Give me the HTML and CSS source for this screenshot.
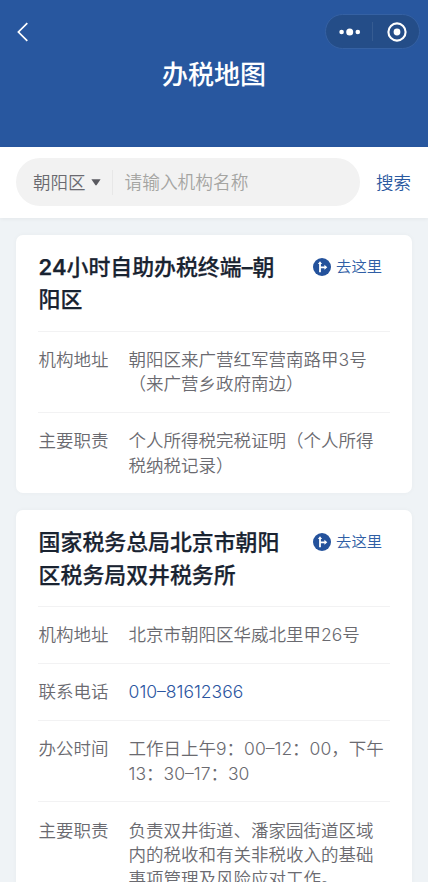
FILE: index.html
```html
<!DOCTYPE html>
<html lang="zh-CN">
<head>
<meta charset="utf-8">
<meta name="viewport" content="width=device-width, initial-scale=1">
<title>办税地图</title>
<link rel="stylesheet" href="styles.css">
</head>
<body>
<svg class="defs" aria-hidden="true">
  <symbol id="route" viewBox="0 0 18 18">
    <circle cx="9" cy="9" r="9" fill="#24529c"/>
    <path d="M7 5v9.2M7 9.3h5.5" fill="none" stroke="#fff" stroke-width="1.8"/>
    <path d="M4.9 6 7 3.3l2.1 2.7zM11.4 6.8l2.9 2.5-2.9 2.5z" fill="#fff"/>
  </symbol>
</svg>
<header class="header">
  <div class="nav">
    <svg class="back" viewBox="0 0 12 20"><path d="M10.3 1.2 1.4 10l8.9 8.8"/></svg>
    <div class="capsule">
      <svg class="more" viewBox="0 0 22 8"><circle cx="2.6" cy="4" r="2.3"/><circle cx="10.7" cy="4" r="3.5"/><circle cx="18.8" cy="4" r="2.3"/></svg>
      <span class="capsule-line"></span>
      <svg class="close" viewBox="0 0 20 20"><circle class="ring" cx="10" cy="10" r="8.6"/><circle class="dot" cx="10" cy="10" r="3.4"/></svg>
    </div>
  </div>
  <h1 class="page-title">办税地图</h1>
</header>
<div class="search">
  <div class="search-box">
    <span class="district">朝阳区</span>
    <svg class="caret" viewBox="0 0 10 7"><path d="M.4.3h9.2L5.7 6q-.7.9-1.4 0z"/></svg>
    <span class="search-line"></span>
    <span class="placeholder">请输入机构名称</span>
  </div>
  <span class="search-button">搜索</span>
</div>
<main class="list">
  <section class="card">
    <div class="card-head">
      <h2 class="name"><span class="digits">24</span>小时自助办税终端<span class="digits">–</span>朝<br>阳区</h2>
      <a class="go"><svg class="route"><use href="#route"/></svg>去这里</a>
    </div>
    <div class="row"><span class="label">机构地址</span><p class="value">朝阳区来广营红军营南路甲3号<br>（来广营乡政府南边）</p></div>
    <div class="row"><span class="label">主要职责</span><p class="value">个人所得税完税证明（个人所得<br>税纳税记录）</p></div>
  </section>
  <section class="card">
    <div class="card-head">
      <h2 class="name">国家税务总局北京市朝阳<br>区税务局双井税务所</h2>
      <a class="go"><svg class="route"><use href="#route"/></svg>去这里</a>
    </div>
    <div class="row"><span class="label">机构地址</span><p class="value">北京市朝阳区华威北里甲26号</p></div>
    <div class="row"><span class="label">联系电话</span><p class="value phone">010–81612366</p></div>
    <div class="row"><span class="label">办公时间</span><p class="value">工作日上午9：00–12：00，下午<br>13：30–17：30</p></div>
    <div class="row"><span class="label">主要职责</span><p class="value">负责双井街道、潘家园街道区域<br>内的税收和有关非税收入的基础<br>事项管理及风险应对工作。</p></div>
  </section>
</main>
</body>
</html>
```
FILE: styles.css
```css
* { box-sizing: border-box; }
html, body { height: 882px; overflow: hidden; }
body {
  margin: 0;
  background: #eff3f6;
  color: #6a6a70;
  font: 350 17.5px/24.4px Inter, "Noto Sans CJK SC", sans-serif;
  display: flex;
  flex-direction: column;
}
h1, h2, p { margin: 0; }
.defs { display: none; }
.header { flex: none; height: 146.5px; background: #28579f; color: #fff; }
.nav {
  height: 49px;
  padding: 14px 8px 0 17px;
  display: flex;
  align-items: flex-start;
  justify-content: space-between;
}
.back { width: 12px; height: 20px; margin-top: 8px; fill: none; stroke: #fff; stroke-width: 1.7; }
.capsule {
  width: 95px;
  height: 35px;
  border: 1px solid #3561a3;
  border-radius: 18px;
  background: #244d88;
  display: flex;
  align-items: center;
  padding: 0 12px 0 13px;
}
.more { width: 22px; height: 8px; fill: #fff; }
.capsule-line { width: 1px; height: 19px; margin-left: 11px; background: #365c92; }
.close { width: 20px; height: 20px; margin-left: auto; }
.ring { fill: none; stroke: #fff; stroke-width: 2.1; }
.dot { fill: #fff; }
.page-title { font-size: 26px; line-height: 51px; font-weight: 500; text-align: center; }
.search {
  flex: none;
  height: 71.5px;
  padding: 0 17px 0 16px;
  background: #fff;
  box-shadow: 0 1px 4px #0000000d;
  display: flex;
  align-items: center;
  justify-content: space-between;
}
.search-box {
  width: 344px;
  height: 48px;
  padding-left: 17px;
  border-radius: 24px;
  background: #f2f2f2;
  display: flex;
  align-items: center;
}
.district, .placeholder, .search-button { padding-top: 1px; }
.caret { width: 10px; height: 7px; margin-left: 5px; fill: #5a5a60; }
.search-line { width: 1px; height: 25px; margin: 0 12px 0 11px; background: #e7e7e7; }
.placeholder { color: #a5a5a2; font-size: 17.7px; }
.search-button { color: #2b599f; }
.list { padding: 17px 16px 0; }
.card {
  margin-bottom: 17px;
  padding: 16px 22px 0;
  border-radius: 7px;
  background: #fff;
  box-shadow: 0 0 5px #00000009;
}
.card-head { display: flex; justify-content: space-between; padding: 0 8px 14.8px 0; }
.name {
  padding-left: .6px;
  color: #192331;
  font-size: 21.9px;
  line-height: 32.4px;
  font-weight: 500;
  white-space: nowrap;
  -webkit-text-stroke: .25px #192331;
}
.digits { font-weight: 600; }
.go { display: flex; align-items: center; height: 32px; color: #2f5ea5; font-size: 15.3px; }
.route { width: 18px; height: 18px; margin-right: 5px; }
.row { display: flex; padding: 16.2px 0 15.4px .6px; border-top: 1px solid #f2f2f3; }
.label { flex: none; width: 90px; }
.value { white-space: nowrap; }
.phone { color: #2b559f; }
```
